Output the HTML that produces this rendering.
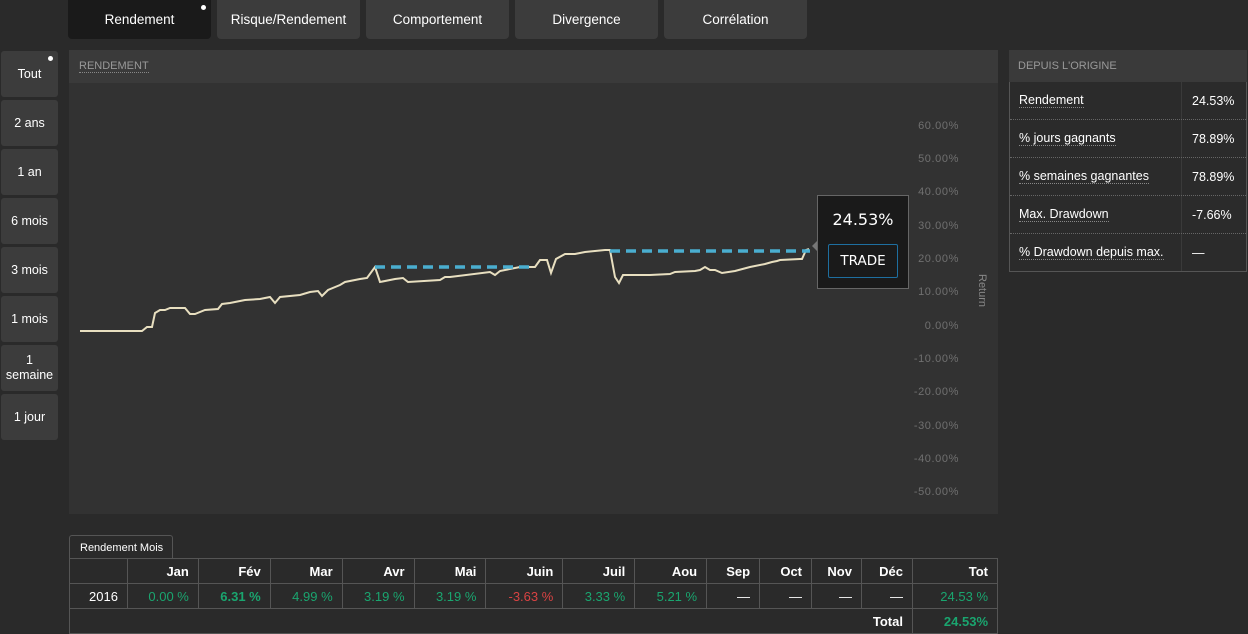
<!DOCTYPE html>
<html><head><meta charset="utf-8"><style>
*{box-sizing:border-box;margin:0;padding:0}
body{width:1248px;height:634px;background:#2a2a2a;font-family:"Liberation Sans",sans-serif;color:#fff;position:relative;overflow:hidden;font-size:13px}
.tab{position:absolute;top:0;height:39px;width:143px;background:#3c3c3c;border-radius:0 0 4px 4px;text-align:center;line-height:39px;font-size:13.5px}
.act{background:#1a1a1a}
.dot{position:absolute;width:5px;height:5px;border-radius:50%;background:#fff}
.lb{position:absolute;left:1px;width:57px;height:46px;background:#3c3c3c;border-radius:3px;display:flex;align-items:center;justify-content:center;text-align:center;font-size:12.5px;line-height:15px}
.ax{position:absolute;right:289px;font-size:11px;color:#707070;text-align:right;width:70px;letter-spacing:0.6px}
table{border-collapse:collapse;position:absolute;left:69px;top:558px;width:929px;font-size:13px}
td{border:1px solid #555;text-align:right;padding:0 9px;height:25px}
.g{color:#1aa56f}.r{color:#d84343}.b{font-weight:bold}
.rp{position:absolute;left:1009px;width:238px}
.row{height:38px;border-bottom:1px dotted #666;position:relative;font-size:12.5px}
.row span{position:absolute;top:12px;left:9px;border-bottom:1px dotted #888;line-height:13px}
.row b{position:absolute;top:12px;left:182px;font-weight:normal}
</style></head><body>
<div class="tab act" style="left:68px">Rendement<div class="dot" style="right:5px;top:5px"></div></div>
<div class="tab" style="left:217px">Risque/Rendement</div>
<div class="tab" style="left:366px">Comportement</div>
<div class="tab" style="left:515px">Divergence</div>
<div class="tab" style="left:664px">Corrélation</div>

<div class="lb act" style="top:51px">Tout<div class="dot" style="right:5px;top:5px"></div></div>
<div class="lb" style="top:100px">2 ans</div>
<div class="lb" style="top:149px">1 an</div>
<div class="lb" style="top:198px">6 mois</div>
<div class="lb" style="top:247px">3 mois</div>
<div class="lb" style="top:296px">1 mois</div>
<div class="lb" style="top:345px">1<br>semaine</div>
<div class="lb" style="top:394px">1 jour</div>

<div style="position:absolute;left:69px;top:50px;width:929px;height:464px;background:#323232">
<div style="height:33px;background:#3a3a3a;padding:10px 0 0 10px;font-size:11px;color:#999"><span style="border-bottom:1px dotted #888">RENDEMENT</span></div>
</div>
<div class="ax" style="top:120px">60.00%</div><div class="ax" style="top:153px">50.00%</div><div class="ax" style="top:186px">40.00%</div><div class="ax" style="top:220px">30.00%</div><div class="ax" style="top:253px">20.00%</div><div class="ax" style="top:286px">10.00%</div><div class="ax" style="top:320px">0.00%</div><div class="ax" style="top:353px">-10.00%</div><div class="ax" style="top:386px">-20.00%</div><div class="ax" style="top:420px">-30.00%</div><div class="ax" style="top:453px">-40.00%</div><div class="ax" style="top:486px">-50.00%</div>
<div style="position:absolute;left:960px;top:290px;width:44px;transform:rotate(90deg);font-size:11px;color:#888">Return</div>
<svg style="position:absolute;left:0;top:0" width="1248" height="634">
<polyline fill="none" stroke="#e8dfc0" stroke-width="2" points="80,331 142,331 147,327 152,327 155,313 160,310 165,310 170,308 185,308 190,314 195,314 205,310 218,309 222,304 230,303 245,300 260,299 270,297 275,303 280,297 300,295 310,292 318,291 322,296 328,290 340,285 345,282 360,279 367,278 375,267 380,282 395,279 403,278 408,282 440,280 445,277 450,277 490,272 495,275 500,271 520,267 535,267 540,260 547,260 551,273 556,259 565,254 575,254 585,252 605,250 610,250 615,277 619,283 623,275 650,275 670,274 675,272 695,271 700,270 705,267 710,270 715,270 722,273 735,271 750,267 765,264 772,262 777,261 780,260 800,259 802,259 806,250 809,249"/>
<line x1="375" y1="267" x2="530" y2="267" stroke="#4aaed0" stroke-width="3.5" stroke-dasharray="10,6"/>
<line x1="610" y1="251" x2="810" y2="251" stroke="#4aaed0" stroke-width="3.5" stroke-dasharray="10,6"/>
<polygon points="812,246 817,241 817,251" fill="#777"/>
</svg>
<div style="position:absolute;left:817px;top:195px;width:92px;height:94px;background:#1a1a1a;border:1px solid #666">
<div style="text-align:center;font-family:'DejaVu Sans',sans-serif;font-size:16px;margin-top:14px">24.53%</div>
<div style="position:absolute;left:10px;top:48px;width:70px;height:34px;border:1px solid #1e6fa0;border-radius:2px;text-align:center;line-height:32px;font-family:'DejaVu Sans',sans-serif;font-size:13.5px">TRADE</div>
</div>

<div class="rp" style="top:50px;height:32px;background:#3a3a3a;font-size:11px;color:#999;padding:10px 0 0 9px">DEPUIS L'ORIGINE</div>
<div class="rp" style="top:82px;height:190px;background:#2b2b2b;border:1px solid #555;border-top:0">
<div style="position:absolute;left:171px;top:0;bottom:0;border-left:1px solid #3a3a3a"></div>
<div class="row"><span>Rendement</span><b>24.53%</b></div>
<div class="row"><span>% jours gagnants</span><b>78.89%</b></div>
<div class="row"><span>% semaines gagnantes</span><b>78.89%</b></div>
<div class="row"><span>Max. Drawdown</span><b>-7.66%</b></div>
<div class="row" style="border:0"><span>% Drawdown depuis max.</span><b>—</b></div>
</div>

<div style="position:absolute;left:69px;top:535px;width:104px;height:24px;border:1px solid #555;border-bottom:0;border-radius:3px 3px 0 0;background:#2a2a2a;font-size:11px;padding:6px 0 0 10px">Rendement Mois</div>
<table>
<colgroup><col style="width:58px"><col style="width:71px"><col style="width:72px"><col style="width:72px"><col style="width:72px"><col style="width:72px"><col style="width:77px"><col style="width:72px"><col style="width:72px"><col style="width:53px"><col style="width:52px"><col style="width:50px"><col style="width:51px"><col style="width:85px"></colgroup>
<tr class="b"><td></td><td>Jan</td><td>Fév</td><td>Mar</td><td>Avr</td><td>Mai</td><td>Juin</td><td>Juil</td><td>Aou</td><td>Sep</td><td>Oct</td><td>Nov</td><td>Déc</td><td>Tot</td></tr>
<tr><td>2016</td><td class="g">0.00 %</td><td class="g b">6.31 %</td><td class="g">4.99 %</td><td class="g">3.19 %</td><td class="g">3.19 %</td><td class="r">-3.63 %</td><td class="g">3.33 %</td><td class="g">5.21 %</td><td>—</td><td>—</td><td>—</td><td>—</td><td class="g">24.53 %</td></tr>
<tr><td colspan="13" class="b" style="border-right:1px solid #555;border-top:1px dotted #666">Total</td><td class="g b" style="border-top:1px dotted #666">24.53%</td></tr>
</table>
</body></html>
